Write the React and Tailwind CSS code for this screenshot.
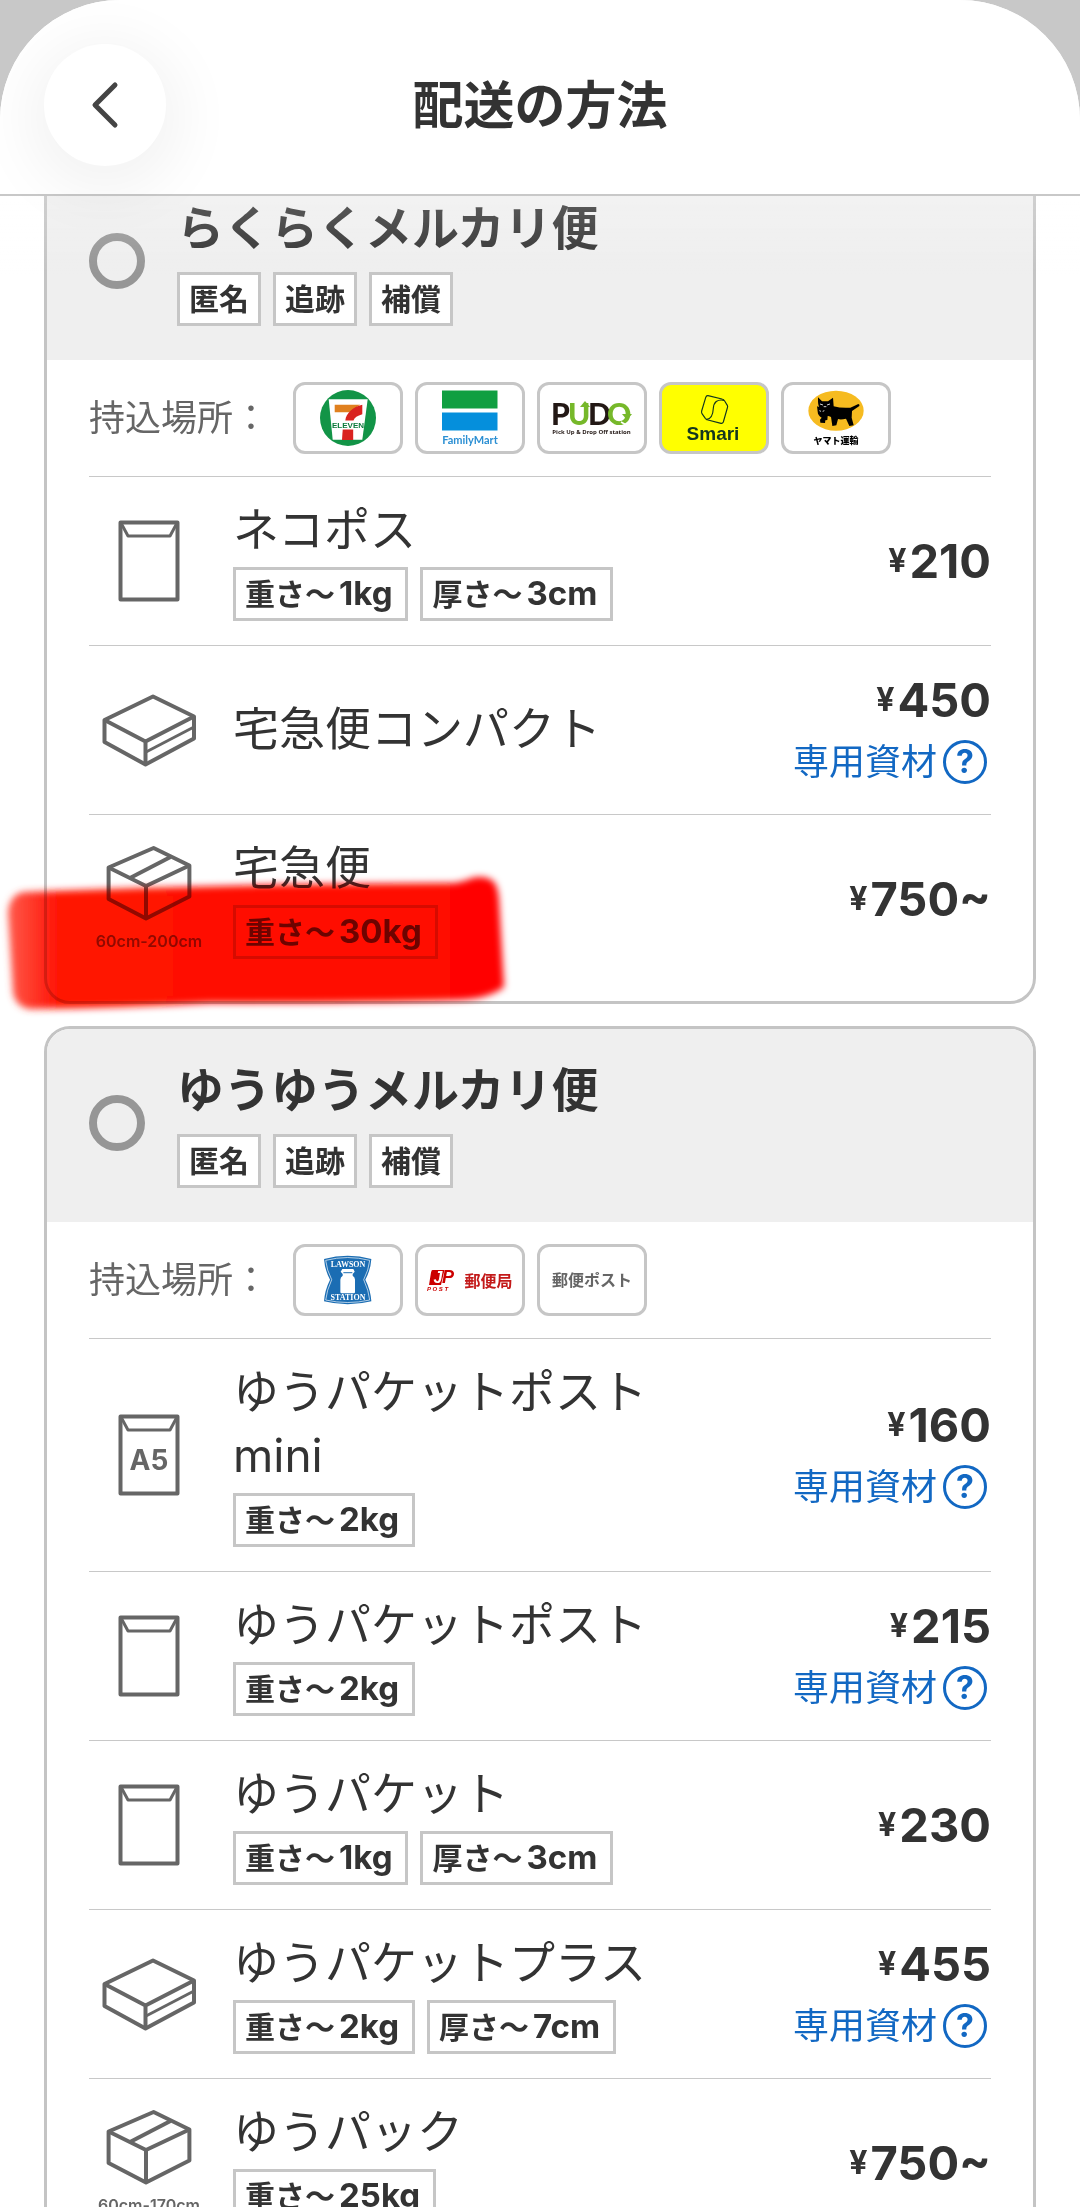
const dropOffRakuraku = [
  { name: 'セブン-イレブン', Logo: SevenEleven },
  { name: 'ファミリーマート', Logo: FamilyMart },
  { name: 'PUDO', Logo: Pudo },
  { name: 'Smari', Logo: Smari, className: 'bg-[#ffff00]' },
  { name: 'ヤマト運輸', Logo: Yamato },
];

const dropOffYuyu = [
  { name: 'ローソン', Logo: Lawson },
  { name: '郵便局', Logo: JapanPost },
  { name: '郵便ポスト', label: '郵便ポスト' },
];

const methods = [
  {
    id: 'rakuraku',
    title: 'らくらくメルカリ便',
    places: dropOffRakuraku,
    marked: true,
    services: [
      { name: 'ネコポス', icon: 'envelope', weight: '1kg', thickness: '3cm', price: '210' },
      { name: '宅急便コンパクト', icon: 'flat', price: '450', material: true },
      { name: '宅急便', icon: 'box', size: '60cm-200cm', weight: '30kg', price: '750~' },
    ],
  },
  {
    id: 'yuyu',
    title: 'ゆうゆうメルカリ便',
    places: dropOffYuyu,
    services: [
      { name: 'ゆうパケットポスト mini', icon: 'a5', weight: '2kg', price: '160', material: true },
      { name: 'ゆうパケットポスト', icon: 'envelope', weight: '2kg', price: '215', material: true },
      { name: 'ゆうパケット', icon: 'envelope', weight: '1kg', thickness: '3cm', price: '230' },
      { name: 'ゆうパケットプラス', icon: 'flat', weight: '2kg', thickness: '7cm', price: '455', material: true },
      { name: 'ゆうパック', icon: 'box', size: '60cm-170cm', weight: '25kg', price: '750~' },
    ],
  },
];

function LogoSvg({ children }) {
  return (
    <svg className="h-full w-full" viewBox="3 3 104 66" aria-hidden="true">
      {children}
    </svg>
  );
}

function SevenEleven() {
  return (
    <LogoSvg>
      <circle cx="55" cy="36" r="28" fill="#129447" />
      <path d="M35.7 17.3h39l-5.4 40.4H39.7z" fill="#fff" />
      <path d="M41.7 22.7h25.6c-3 1.5-5.6 4-7.5 7.5H41.7z" fill="#e0801f" />
      <path d="M69.3 22.7v9.500c-4.800 1.300-8 3.500-8.800 6.300h-8.200c.8-7.300 7.500-13.600 17-15.800z" fill="#d9231f" />
      <path d="M49.700 47.500h10.500v10.500H49z" fill="#d9231f" />
      <text x="55" y="45.500" textAnchor="middle" fontSize="8" fontWeight="700" fill="#0c7a3b" className="font-['Liberation_Sans_Narrow','Liberation_Sans',sans-serif]">
        ELEVEN
      </text>
    </LogoSvg>
  );
}

function FamilyMart() {
  return (
    <LogoSvg>
      <rect x="27" y="8.500" width="55.500" height="18" fill="#109f41" />
      <rect x="27" y="30.500" width="55.500" height="18" fill="#058fdc" />
      <text x="55" y="62" textAnchor="middle" fontSize="11" fontWeight="700" fill="#2b8fd3" className="font-[Lato,sans-serif]">
        FamilyMart
      </text>
    </LogoSvg>
  );
}

function Pudo() {
  return (
    <LogoSvg>
      <g fontSize="30" fontWeight="900" className="font-[Lato,sans-serif]">
        <text x="14" y="43" fill="#231815">P</text>
        <text x="31" y="43" fill="#76b82a">U</text>
        <text x="51" y="43" fill="#231815">D</text>
        <text x="70" y="43" fill="#76b82a">O</text>
      </g>
      <path d="M43 25l5-6 5 6z" fill="#76b82a" />
      <path d="M85 32h10l-5 6z" fill="#76b82a" />
      <path d="M84 40l7 4" stroke="#fff" strokeWidth="1.500" />
      <text x="54.500" y="51.500" textAnchor="middle" fontSize="6" fontWeight="700" fill="#231815" className="font-['Open_Sans',sans-serif]">
        Pick Up &amp; Drop Off station
      </text>
    </LogoSvg>
  );
}

function Smari() {
  return (
    <LogoSvg>
      <g transform="translate(-19 -6) scale(.3333)" fill="none" stroke="#14371f" strokeWidth="3.500" strokeLinejoin="round">
        <path d="M204 59l42 10q5 1 8 6l8 13q2 4 0 8l-12 42q-2 5-7 4l-39-10q-5-1-8-5l-10-14q-2-4-1-8l12-40q2-7 7-6z" />
        <path d="M252 73c-20-4-31 6-32 24-1 20-5 34-22 34" />
      </g>
      <text x="54" y="58" textAnchor="middle" fontSize="19" fontWeight="700" fill="#14371f" className="font-['Liberation_Sans',sans-serif]">
        Smari
      </text>
    </LogoSvg>
  );
}

function Yamato() {
  return (
    <LogoSvg>
      <g transform="translate(-140.300 -6) scale(.3333)">
        <ellipse cx="586" cy="104" rx="83" ry="60" fill="#f6bb20" />
        <path
          d="M532 64l12 12h18l15-11 2 26q22 6 50 4l24-11q5 1 3 6l-22 15-1 20 6 23-13 2-10-22q-16 4-24 1l-5 19-12 2-4-27q-8-4-10-3l-1 12-6 1-1 8-14-1-1-9 5-6q-12-8-12-18l-2-16 6 2q-3-8-3-15z"
          fill="#000"
        />
        <path d="M538 84l9 3M559 87l9-3M549 92h8M536 104l5 2M546 106l5-2" stroke="#fff" strokeWidth="2.500" />
      </g>
      <text x="55" y="62" textAnchor="middle" fontSize="9" fontWeight="900" fill="#000">
        ヤマト運輸
      </text>
    </LogoSvg>
  );
}

function Lawson() {
  return (
    <LogoSvg>
      <g transform="translate(-23.300 -14.300) scale(.3333)">
        <path d="M163 88q71-20 142 0-2 32-18 62 16 32 18 65-71 18-142 0 2-33 18-65-16-30-18-62z" fill="#1b6db3" />
        <path d="M168 92q66-17 132 0-3 29-18 58 15 32 18 61-66 15-132 0 3-29 18-61-15-29-18-58z" fill="none" stroke="#fff" strokeWidth="2" />
        <path d="M218 118h33l4 8-6 7v5q7 4 7 12v37q0 4-4 4h-36q-4 0-4-4v-37q0-8 7-12v-5l-6-7z" fill="#fff" />
        <path d="M221 129h27" stroke="#1b6db3" strokeWidth="3" />
      </g>
      <g textAnchor="middle" fontSize="8" fontWeight="700" fill="#fff" className="font-['Liberation_Serif',serif]">
        <text x="55" y="22.500">LAWSON</text>
        <text x="55" y="55.500">STATION</text>
      </g>
    </LogoSvg>
  );
}

function JapanPost() {
  return (
    <LogoSvg>
      <path d="M17.500 26h12l-3.500 15H14l2-12.500q.4-2.500 1.500-2.500z" fill="#c00" />
      <g fontWeight="700" fontStyle="italic" className="font-['Liberation_Sans',sans-serif]">
        <text x="18.500" y="38.500" fontSize="16" fill="#fff">J</text>
        <text x="27" y="38.500" fontSize="18" fill="#c00">P</text>
        <text x="12" y="47" fontSize="6" fill="#c00">P O S T</text>
      </g>
      <text x="49.500" y="43" fontSize="16" fontWeight="700" fill="#c31a1a">郵便局</text>
    </LogoSvg>
  );
}

function Envelope({ label }) {
  return (
    <svg className="h-[82px] w-[62px]" viewBox="0 0 62 82" fill="none" stroke="#666" strokeWidth="4" strokeLinejoin="round" aria-hidden="true">
      <rect x="2.500" y="2.500" width="57" height="77" />
      <path d="M3 3l7 13h42l7-13" strokeWidth="3" />
      {label && (
        <text x="31" y="56" textAnchor="middle" fontSize="28" fontWeight="700" fill="#666" stroke="none">
          {label}
        </text>
      )}
    </svg>
  );
}

function FlatBox() {
  return (
    <svg className="h-[74px] w-[94px]" viewBox="102 691 94 74" fill="none" stroke="#666" strokeWidth="4" strokeLinejoin="round" aria-hidden="true">
      <path d="M153 694.500l-48.500 23.500v22l41 22.500 48.500-26v-22z" />
      <path d="M104.500 718l41 21.500 48.500-25M145.500 739.500v23" />
      <path d="M146 750l47-24.500" strokeWidth="3" />
    </svg>
  );
}

function CardboardBox() {
  return (
    <svg className="h-[76px] w-[86px]" viewBox="107 846 86 76" fill="none" stroke="#666" strokeWidth="4" strokeLinejoin="round" aria-hidden="true">
      <path d="M154.600 849l-45 19.500v31.500l37.400 19.500 43.400-22v-31z" />
      <path d="M109.600 868.500l37.400 18.500 43.400-20.500M147 887v32" />
      <path d="M131 879l40.500-21" />
    </svg>
  );
}

function ServiceIcon({ icon }) {
  if (icon === 'flat') return <FlatBox />;
  if (icon === 'box') return <CardboardBox />;
  return <Envelope label={icon === 'a5' ? 'A5' : ''} />;
}

function Badge({ children }) {
  return (
    <span className="flex h-[54px] items-center border-3 border-[#c6c6c6] bg-white px-[9px] text-[30px] font-bold whitespace-nowrap">
      {children}
    </span>
  );
}

function Limit({ label, value }) {
  return (
    <Badge>
      {label}〜<span className="mx-1 text-[33px]">{value}</span>
    </Badge>
  );
}

function Service({ service }) {
  return (
    <li className="flex min-h-[169px] items-center gap-6 border-t border-[#c8c8c8] py-5">
      <div className="flex w-[120px] shrink-0 flex-col items-center gap-2">
        <ServiceIcon icon={service.icon} />
        {service.size && <span className="text-[16px] leading-6 font-semibold text-[#666]">{service.size}</span>}
      </div>
      <div className="min-w-0 flex-1 pr-10 pb-1">
        <h3 className="text-[46px] leading-[64px]">{service.name}</h3>
        {service.weight && (
          <div className="mt-[6px] flex gap-3">
            <Limit label="重さ" value={service.weight} />
            {service.thickness && <Limit label="厚さ" value={service.thickness} />}
          </div>
        )}
      </div>
      <div className="flex shrink-0 flex-col items-end">
        <p className="flex h-16 items-center text-[47px] font-bold">
          <span className="mr-[3px] text-[32px]">¥</span>
          {service.price}
        </p>
        {service.material && (
          <a href="#material" className="flex h-[60px] items-center gap-[6px] pr-1 text-[36px] text-[#1268c3]">
            専用資材
            <span className="flex size-11 items-center justify-center rounded-full border-3 text-[32px] font-bold">?</span>
          </a>
        )}
      </div>
    </li>
  );
}

function MethodCard({ method }) {
  return (
    <section className="relative">
      <div className="overflow-hidden rounded-[26px] border-3 border-[#c4c4c4] bg-white">
        <div className="flex items-center gap-8 bg-[#efefef] pt-[29px] pr-10 pb-[34px] pl-[42px]">
          <input
            type="radio"
            name="method"
            id={method.id}
            className="size-14 shrink-0 appearance-none rounded-full border-8 border-[#969696] checked:border-[#ff333f]"
          />
          <div>
            <label htmlFor={method.id} className="block text-[47px] leading-[64px] font-bold">
              {method.title}
            </label>
            <div className="mt-3 flex gap-3">
              <Badge>匿名</Badge>
              <Badge>追跡</Badge>
              <Badge>補償</Badge>
            </div>
          </div>
        </div>
        <div className="px-[42px] pb-[18px]">
          <div className="flex items-center gap-6 py-[22px]">
            <span className="text-[36px] text-[#666]">持込場所：</span>
            <ul className="flex gap-3">
              {method.places.map(({ name, Logo, label, className = 'bg-white' }) => (
                <li
                  key={name}
                  className={`flex h-[72px] w-[110px] items-center justify-center overflow-hidden rounded-xl border-3 border-[#c6c6c6] ${className}`}
                >
                  {Logo ? <Logo /> : <span className="text-[16px] font-bold text-[#666]">{label}</span>}
                </li>
              ))}
            </ul>
          </div>
          <ul>
            {method.services.map((s) => (
              <Service key={s.name} service={s} />
            ))}
          </ul>
        </div>
      </div>
      {method.marked && (
        <>
          <Marker className="mix-blend-multiply" fill="url(#ink)" />
          <Marker className="mix-blend-screen" fill="#480000" />
        </>
      )}
    </section>
  );
}

// Red highlighter stroke over the last service of the card
function Marker({ className, fill }) {
  return (
    <svg
      className={`pointer-events-none absolute -bottom-4 -left-11 h-[160px] w-[520px] ${className}`}
      viewBox="0 860 520 160"
      aria-hidden="true"
    >
      <defs>
        <filter id="soft" x="-5%" y="-15%" width="110%" height="130%">
          <feGaussianBlur stdDeviation="3.500" />
        </filter>
        <linearGradient id="ink" x1="0" x2="1">
          <stop offset="0" stopColor="#ff5a4c" />
          <stop offset=".1" stopColor="#ff1405" />
          <stop offset=".8" stopColor="#ff0c00" />
          <stop offset="1" stopColor="#ff0000" />
        </linearGradient>
      </defs>
      <path
        d="M8 912q2-18 16-20 150-6 300-8l130-1q12-2 18-5 14-3 22 4 4 5 5 18l5 87q-16 12-44 13-100 3-250 3-90 5-180 6-14-2-17-16z"
        fill={fill}
        filter="url(#soft)"
      />
    </svg>
  );
}

export default function App() {
  return (
    <div className="h-screen bg-[#c8c8c8] font-[Inter,'Noto_Sans_CJK_JP',sans-serif] text-[#333]">
      <div className="flex h-full flex-col overflow-hidden rounded-t-[120px] bg-white">
        <header className="relative z-10 flex h-[196px] shrink-0 items-center justify-center border-b-2 border-[#c8c8c8] bg-white pt-[18px]">
          <button
            type="button"
            aria-label="戻る"
            className="absolute top-11 left-11 flex size-[122px] items-center justify-center rounded-full bg-white shadow-[0_12px_60px_16px_rgba(0,0,0,0.05)]"
          >
            <svg className="h-12 w-7" viewBox="0 0 28 48" fill="none" stroke="#444" strokeWidth="5" strokeLinecap="round" strokeLinejoin="round">
              <path d="M24 4L4 24l20 20" />
            </svg>
          </button>
          <h1 className="text-[51px] font-bold">配送の方法</h1>
          <div className="pointer-events-none absolute inset-x-0 top-full mt-[2px] h-20 bg-linear-to-b from-white/20 to-transparent" />
        </header>
        <main className="min-h-0 flex-1 overflow-y-auto [scrollbar-width:none]">
          <div className="-mt-8 flex flex-col gap-[22px] px-11">
            {methods.map((m) => (
              <MethodCard key={m.id} method={m} />
            ))}
          </div>
        </main>
      </div>
    </div>
  );
}
